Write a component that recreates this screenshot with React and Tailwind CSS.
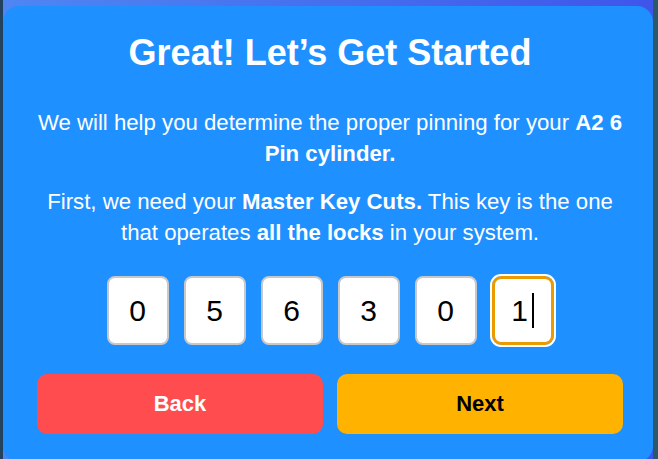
export default function App() {
  const cuts = ['0', '5', '6', '3', '0', '1'];

  return (
    <div
      className="min-h-screen w-full bg-gradient-to-r from-[#4f86f2] to-[#3f55ea] border-l-[3px] border-r-[5px] border-l-[#23425e] border-r-[#2a5a6a] pt-[6px]"
      style={{ fontFamily: '"Liberation Sans", Arial, sans-serif' }}
    >
      <div className="bg-[#1e90ff] rounded-[16px] pt-[25px] pb-[28px] pl-[34px] pr-[30px] text-white text-center">
        <h1 className="text-[36px] font-bold leading-[1.2]">Great! Let’s Get Started</h1>

        <p className="mt-[33px] text-[22.2px] leading-[1.4]">
          We will help you determine the proper pinning for your <b>A2 6 Pin cylinder.</b>
        </p>
        <p className="mt-[17px] text-[22.2px] leading-[1.4]">
          First, we need your <b>Master Key Cuts.</b> This key is the one that operates <b>all the locks</b> in your
          system.
        </p>

        <div className="mt-[27px] flex justify-center gap-[15px]">
          {cuts.map((c, i) =>
            i === cuts.length - 1 ? (
              <div
                key={i}
                className="w-[62px] h-[69px] rounded-[9px] bg-white border-[3px] border-[#eb9a00] outline-2 outline-white flex items-center justify-center text-black text-[30px]"
              >
                <span>{c}</span>
                <span className="w-[2px] h-[35px] bg-black ml-[4px]" />
              </div>
            ) : (
              <div
                key={i}
                className="w-[62px] h-[69px] rounded-[8px] bg-white border-2 border-[#c8c8c8] flex items-center justify-center text-black text-[30px]"
              >
                {c}
              </div>
            )
          )}
        </div>

        <div className="mt-[29px] flex gap-[14px]">
          <button className="flex-1 h-[60px] rounded-[10px] bg-[#ff4d4f] text-white text-[22px] font-bold">Back</button>
          <button className="flex-1 h-[60px] rounded-[10px] bg-[#ffb300] text-black text-[22px] font-bold">Next</button>
        </div>
      </div>
    </div>
  );
}
